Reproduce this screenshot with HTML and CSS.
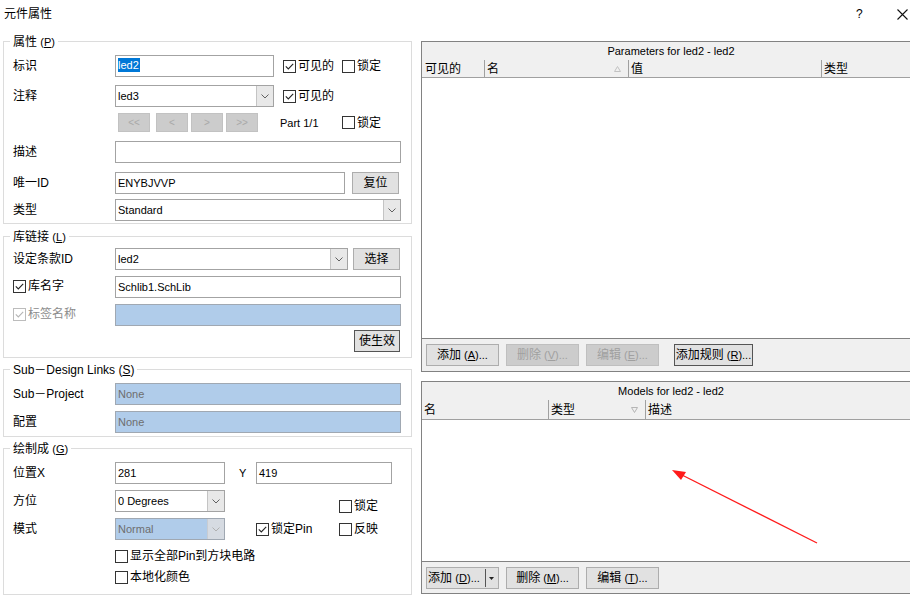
FILE: index.html
```html
<!DOCTYPE html>
<html>
<head>
<meta charset="utf-8">
<title>元件属性</title>
<link rel="stylesheet" href="styles.css">
</head>
<body>
<div class="titlebar">
  <span class="title">元件属性</span>
  <span class="tb-help">?</span>
  <span class="tb-close"><svg width="11" height="11" viewBox="0 0 11 11"><path d="M0.5 0.5 L10.5 10.5 M10.5 0.5 L0.5 10.5" stroke="#111" stroke-width="1.1" fill="none"/></svg></span>
</div>
<div class="main">
  <div class="left">
    <div class="group g1">
      <div class="legend">属性 <span class="en">(<u>P</u>)</span></div>
      <div class="row">
        <span class="lbl">标识</span>
        <div class="inp w159"><span class="selt">led2</span></div>
        <span class="cb ml9 w59"><span class="box"><svg width="11" height="11" viewBox="0 0 11 11"><path d="M1.8 5.4 L4.3 7.9 L9.2 2.8" fill="none" stroke="#222" stroke-width="1.1"/></svg></span>可见的</span>
        <span class="cb"><span class="box"></span>锁定</span>
      </div>
      <div class="row mt8">
        <span class="lbl">注释</span>
        <div class="combo w159"><span class="v">led3</span><span class="dd"><svg width="8" height="5" viewBox="0 0 8 5"><path d="M0.5 0.5 L4 4 L7.5 0.5" fill="none" stroke="#606060"/></svg></span></div>
        <span class="cb ml9"><span class="box"><svg width="11" height="11" viewBox="0 0 11 11"><path d="M1.8 5.4 L4.3 7.9 L9.2 2.8" fill="none" stroke="#222" stroke-width="1.1"/></svg></span>可见的</span>
      </div>
      <div class="row navrow mt6">
        <span class="lbl"></span>
        <div class="nav">
          <span class="nb">&lt;&lt;</span>
          <span class="nb nb-gap">&lt;</span>
          <span class="nb">&gt;</span>
          <span class="nb">&gt;&gt;</span>
        </div>
        <span class="part">Part 1/1</span>
        <span class="cb"><span class="box"></span>锁定</span>
      </div>
      <div class="row mt9">
        <span class="lbl">描述</span>
        <div class="inp w286"></div>
      </div>
      <div class="row mt9">
        <span class="lbl">唯一ID</span>
        <div class="inp w230">ENYBJVVP</div>
        <span class="btn ml7 w47">复位</span>
      </div>
      <div class="row mt5">
        <span class="lbl">类型</span>
        <div class="combo w286"><span class="v">Standard</span><span class="dd"><svg width="8" height="5" viewBox="0 0 8 5"><path d="M0.5 0.5 L4 4 L7.5 0.5" fill="none" stroke="#606060"/></svg></span></div>
      </div>
    </div>

    <div class="group g2">
      <div class="legend">库链接 <span class="en">(<u>L</u>)</span></div>
      <div class="row">
        <span class="lbl">设定条款ID</span>
        <div class="combo w233"><span class="v">led2</span><span class="dd"><svg width="8" height="5" viewBox="0 0 8 5"><path d="M0.5 0.5 L4 4 L7.5 0.5" fill="none" stroke="#606060"/></svg></span></div>
        <span class="btn ml5 w47">选择</span>
      </div>
      <div class="row mt6">
        <span class="lbl"><span class="cb"><span class="box"><svg width="11" height="11" viewBox="0 0 11 11"><path d="M1.8 5.4 L4.3 7.9 L9.2 2.8" fill="none" stroke="#222" stroke-width="1.1"/></svg></span>库名字</span></span>
        <div class="inp w286">Schlib1.SchLib</div>
      </div>
      <div class="row mt6">
        <span class="lbl"><span class="cb dis"><span class="box"><svg width="11" height="11" viewBox="0 0 11 11"><path d="M1.8 5.4 L4.3 7.9 L9.2 2.8" fill="none" stroke="#b5b5b5" stroke-width="1.1"/></svg></span>标签名称</span></span>
        <div class="inp dis w286"></div>
      </div>
      <div class="row mt4">
        <span class="btn def apply">使生效</span>
      </div>
    </div>

    <div class="group g3">
      <div class="legend">Sub－Design Links (<u>S</u>)</div>
      <div class="row">
        <span class="lbl">Sub－Project</span>
        <div class="inp dis w286">None</div>
      </div>
      <div class="row mt6">
        <span class="lbl">配置</span>
        <div class="inp dis w286">None</div>
      </div>
    </div>

    <div class="group g4">
      <div class="legend">绘制成 <span class="en">(<u>G</u>)</span></div>
      <div class="row">
        <span class="lbl">位置X</span>
        <div class="inp w110">281</div>
        <span class="ylbl">Y</span>
        <div class="inp w136">419</div>
      </div>
      <div class="row mt6">
        <span class="lbl">方位</span>
        <div class="combo w110"><span class="v">0 Degrees</span><span class="dd"><svg width="8" height="5" viewBox="0 0 8 5"><path d="M0.5 0.5 L4 4 L7.5 0.5" fill="none" stroke="#606060"/></svg></span></div>
        <span class="cb lock2"><span class="box"></span>锁定</span>
      </div>
      <div class="row mt6">
        <span class="lbl">模式</span>
        <div class="combo dis w110"><span class="v">Normal</span><span class="dd"><svg width="8" height="5" viewBox="0 0 8 5"><path d="M0.5 0.5 L4 4 L7.5 0.5" fill="none" stroke="#b0b0b0"/></svg></span></div>
        <span class="cb pinlock"><span class="box"><svg width="11" height="11" viewBox="0 0 11 11"><path d="M1.8 5.4 L4.3 7.9 L9.2 2.8" fill="none" stroke="#222" stroke-width="1.1"/></svg></span>锁定Pin</span>
        <span class="cb"><span class="box"></span>反映</span>
      </div>
      <div class="row cbrow mt7">
        <span class="cb ml102"><span class="box"></span>显示全部Pin到方块电路</span>
      </div>
      <div class="row cbrow mt3">
        <span class="cb ml102"><span class="box"></span>本地化颜色</span>
      </div>
    </div>
  </div>

  <div class="right">
    <div class="panel params">
      <div class="ph">Parameters for led2 - led2</div>
      <div class="ch">
        <span class="c pc1">可见的</span>
        <span class="c pc2">名<svg width="7" height="6" viewBox="0 0 7 6"><path d="M3.5 0.5 L6.5 5.5 L0.5 5.5 Z" fill="none" stroke="#c2c2c2"/></svg></span>
        <span class="c pc3">值</span>
        <span class="c last">类型</span>
      </div>
      <div class="list"></div>
      <div class="bar bar1">
        <span class="btn w73">添加 <span class="en">(<u>A</u>)...</span></span>
        <span class="btn dis w73">删除 <span class="en">(<u>V</u>)...</span></span>
        <span class="btn dis w73">编辑 <span class="en">(<u>E</u>)...</span></span>
        <span class="btn def rule">添加规则 <span class="en">(<u>R</u>)...</span></span>
      </div>
    </div>
    <div class="panel models">
      <div class="ph">Models for led2 - led2</div>
      <div class="ch">
        <span class="c mc1">名</span>
        <span class="c mc2">类型<svg width="7" height="6" viewBox="0 0 7 6"><path d="M0.5 0.5 L6.5 0.5 L3.5 5.5 Z" fill="none" stroke="#b5b5b5"/></svg></span>
        <span class="c last">描述</span>
      </div>
      <div class="list"></div>
      <div class="bar bar2">
        <span class="btn split w73"><span class="st">添加 <span class="en">(<u>D</u>)...</span></span><span class="sa"><svg width="5" height="3" viewBox="0 0 5 3"><path d="M0 0 L5 0 L2.5 3 Z" fill="#222"/></svg></span></span>
        <span class="btn w73">删除 <span class="en">(<u>M</u>)...</span></span>
        <span class="btn w73">编辑 <span class="en">(<u>T</u>)...</span></span>
      </div>
    </div>
  </div>
</div>

<svg class="annot" width="910" height="596" viewBox="0 0 910 596">
  <line x1="817" y1="543" x2="682" y2="475" stroke="#ff1a1a" stroke-width="1.3"/>
  <polygon points="672,470 686,472 681,480" fill="#ff1a1a"/>
</svg>
</body>
</html>
```

FILE: styles.css
```css
* { box-sizing: border-box; }
html, body { margin: 0; padding: 0; }
body {
  width: 910px;
  height: 596px;
  overflow: hidden;
  position: relative;
  background: #fff;
  color: #000;
  font-family: "Liberation Sans", "Noto Sans CJK SC", sans-serif;
  font-size: 12px;
  line-height: 14px;
}
u { text-decoration: underline; text-underline-offset: 1px; }
.en { font-size: 11px; }

/* title bar */
.titlebar { height: 41px; display: flex; align-items: flex-start; padding-top: 7px; }
.title { margin-left: 4px; line-height: 15px; }
.tb-help { margin-left: auto; width: 8px; line-height: 15px; }
.tb-close { margin-left: 33px; margin-right: 2px; margin-top: 2px; display: flex; }

/* layout */
.main { display: flex; align-items: flex-start; }
.left { width: 409px; margin-left: 3px; flex: none; }
.right { width: 500px; margin-left: 9px; flex: none; }

/* group boxes */
.group { border: 1px solid #dcdcdc; position: relative; padding: 13px 0 0 9px; }
.legend {
  position: absolute; top: -7px; left: 6px;
  background: #fff; padding: 0 3px; line-height: 14px; white-space: nowrap;
}
.g1 { padding-bottom: 2px; }
.g2 { margin-top: 12px; padding-top: 11px; padding-bottom: 5px; }
.g3 { margin-top: 11px; padding-bottom: 3px; }
.g4 { margin-top: 11px; padding-bottom: 8px; }

.row { display: flex; align-items: center; height: 22px; }
.navrow { height: 19px; }
.cbrow { height: 18px; }
.mt3 { margin-top: 3px; }
.mt4 { margin-top: 4px; }
.mt5 { margin-top: 5px; }
.mt6 { margin-top: 6px; }
.mt7 { margin-top: 7px; }
.mt8 { margin-top: 8px; }
.mt9 { margin-top: 9px; }
.ml5 { margin-left: 5px; }
.ml7 { margin-left: 7px; }
.ml9 { margin-left: 9px; }
.ml102 { margin-left: 102px; }
.lbl { width: 102px; flex: none; white-space: nowrap; }

.w47 { width: 47px; }
.w59 { width: 59px; }
.w73 { width: 73px; }
.w110 { width: 110px; }
.w136 { width: 136px; }
.w159 { width: 159px; }
.w230 { width: 230px; }
.w233 { width: 233px; }
.w286 { width: 286px; }

/* inputs */
.inp {
  height: 22px; flex: none;
  border: 1px solid #a3a3a3; background: #fff;
  font-size: 11px; line-height: 20px; padding-left: 2px;
  white-space: nowrap; overflow: hidden;
}
.inp.dis { background: #b0ccea; color: #6e6e6e; border-color: #a0a8b2; }
.selt { display: inline-block; background: #0078d7; color: #fff; line-height: 14px; padding: 0 1px 0 0; vertical-align: 1px; }

.combo { display: flex; height: 22px; flex: none; border: 1px solid #a3a3a3; background: #fff; }
.combo .v { flex: 1; font-size: 11px; line-height: 20px; padding-left: 2px; white-space: nowrap; overflow: hidden; }
.combo .dd {
  width: 17px; flex: none;
  border-left: 1px solid #c4c4c4; background: #e8e8e8;
  display: flex; align-items: center; justify-content: center;
}
.combo.dis { background: #b0ccea; border-color: #a0a8b2; }
.combo.dis .v { color: #6e6e6e; }
.combo.dis .dd { background: #d6dbe2; border-left-color: #c8ccd2; }

/* buttons */
.btn {
  height: 22px; flex: none;
  border: 1px solid #adadad; background: #e1e1e1;
  display: flex; align-items: center; justify-content: center;
  white-space: nowrap; gap: 3px;
}
.btn.def { border-color: #555; }
.btn.dis { background: #cccccc; border-color: #bfbfbf; color: #a0a0a0; }
.apply { width: 46px; margin-left: 341px; }
.rule { width: 79px; margin-left: 8px; }

.nav { display: flex; margin-left: 3px; width: 162px; flex: none; }
.nb {
  width: 32px; height: 19px; flex: none; margin-right: 3px;
  background: #cccccc; border: 1px solid #c2c2c2; color: #a9a9a9;
  font-size: 10px; display: flex; align-items: center; justify-content: center;
}
.nb:first-child { margin-right: 6px; }
.part { width: 62px; flex: none; font-size: 11px; }

/* checkboxes */
.cb { display: inline-flex; align-items: center; gap: 2px; white-space: nowrap; flex: none; }
.box {
  width: 13px; height: 13px; flex: none;
  border: 1px solid #333; background: #fff;
  display: flex; align-items: center; justify-content: center;
}
.cb.dis { color: #8c8c8c; }
.cb.dis .box { border-color: #bcbcbc; }
.ylbl { margin-left: 14px; width: 17px; font-size: 11px; flex: none; }
.lock2 { margin-left: 114px; align-self: flex-start; margin-top: 9px; }
.pinlock { margin-left: 31px; width: 83px; }

/* right panels */
.panel { border: 1px solid #828282; display: flex; flex-direction: column; }
.params { height: 331px; }
.models { height: 213px; margin-top: 9px; }
.ph { height: 18px; flex: none; background: #f0f0f0; text-align: center; font-size: 11px; line-height: 18px; }
.ch { display: flex; height: 18px; flex: none; background: #f0f0f0; border-bottom: 1px solid #a0a0a0; }
.models .ch { height: 20px; }
.ch .c {
  display: flex; align-items: center; justify-content: space-between;
  border-right: 1px solid #a0a0a0; padding-left: 2px; white-space: nowrap; flex: none;
}
.ch .c.last { border-right: 0; flex: 1; }
.pc1 { width: 63px; padding-left: 3px !important; }
.pc2 { width: 144px; padding-right: 7px; }
.pc3 { width: 193px; }
.mc1 { width: 127px; }
.mc2 { width: 97px; padding-right: 7px; }
.list { flex: 1; background: #fff; }
.bar {
  flex: none; background: #f0f0f0; border-top: 1px solid #828282;
  display: flex; align-items: flex-start; gap: 7px; padding: 5px 0 0 4px;
}
.bar1 { height: 33px; }
.bar2 { height: 32px; }
.split { justify-content: flex-start; gap: 0; }
.split .st { width: 58px; padding-left: 1px; flex: none; white-space: nowrap; }
.split .sa {
  height: 18px; width: 12px; flex: none;
  border-left: 1px solid #555;
  display: flex; align-items: center; justify-content: center;
}

/* annotation overlay */
.annot { position: absolute; left: 0; top: 0; pointer-events: none; }
```
